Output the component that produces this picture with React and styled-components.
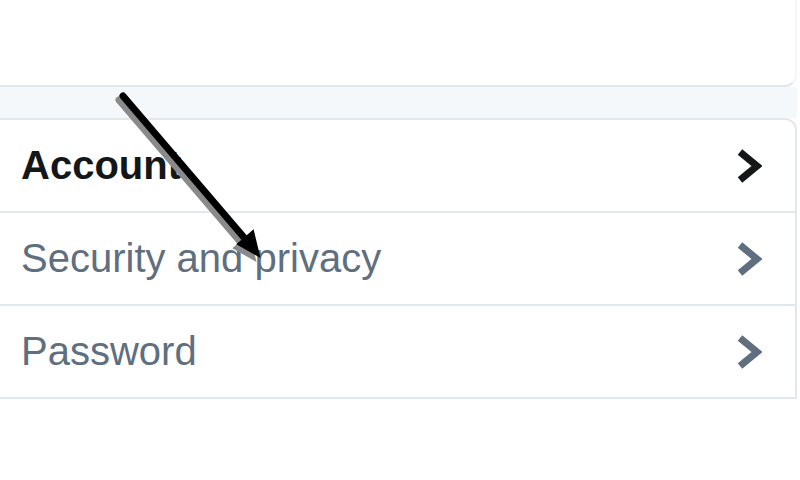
import React from 'react';
import styled, { createGlobalStyle } from 'styled-components';

const items = [
    { label: 'Account', active: true },
    { label: 'Security and privacy' },
    { label: 'Password' },
];

const Chevron = ({ color }) => (
    <svg width="26" height="36" viewBox="0 0 26 36">
        <path d="M4 4 L21 18 L4 32" fill="none" stroke={color} strokeWidth="7" strokeLinejoin="miter" />
    </svg>
);

const App = () => {
    return (
        <Page>
            <GlobalStyle />
            <Column>
                <TopCard />
                <Gap />
                <ListCard>
                    {items.map((item) => (
                        <Row key={item.label}>
                            <Label $active={item.active}>{item.label}</Label>
                            <Chevron color={item.active ? '#14171a' : '#5f6f7f'} />
                        </Row>
                    ))}
                </ListCard>
            </Column>
            <Pointer width="800" height="480" viewBox="0 0 800 480">
                <g stroke="#8a8a8a" fill="#8a8a8a" transform="translate(-4 4)">
                    <line x1="123" y1="96" x2="247" y2="241" strokeWidth="7" strokeLinecap="round" />
                    <polygon points="259,256 253,231 238,244" strokeWidth="2" />
                </g>
                <g stroke="#000" fill="#000">
                    <line x1="123" y1="96" x2="247" y2="241" strokeWidth="7" strokeLinecap="round" />
                    <polygon points="259,256 253,231 238,244" strokeWidth="2" />
                </g>
            </Pointer>
        </Page>
    );
};

const GlobalStyle = createGlobalStyle`
    body {
        margin: 0;
        background: #fff;
        font-family: "Liberation Sans", Arial, sans-serif;
    }
`;

const Page = styled.div`
    position: relative;
    width: 800px;
    height: 480px;
    overflow: hidden;
    background: #fff;
`;

const Column = styled.div`
    display: flex;
    flex-direction: column;
    width: 797px;
`;

const TopCard = styled.div`
    height: 87px;
    background: #fff;
    border-right: 2px solid #f4f7f9;
    border-bottom: 2px solid #e1e8ed;
    border-bottom-right-radius: 12px;
    box-sizing: border-box;
`;

const Gap = styled.div`
    height: 31px;
    background: #f5f8fa;
`;

const ListCard = styled.div`
    background: #fff;
    border-top: 2px solid #e1e8ed;
    border-right: 2px solid #e1e8ed;
    border-top-right-radius: 12px;
`;

const Row = styled.div`
    display: flex;
    align-items: center;
    justify-content: space-between;
    height: 91px;
    padding: 0 33px 0 21px;
    border-bottom: 2px solid #e1e8ed;
`;

const Label = styled.span`
    font-size: 40px;
    font-weight: ${(p) => (p.$active ? 700 : 400)};
    color: ${(p) => (p.$active ? '#14171a' : '#5f6f7f')};
`;

const Pointer = styled.svg`
    position: absolute;
    left: 0;
    top: 0;
    pointer-events: none;
`;

export default App;
